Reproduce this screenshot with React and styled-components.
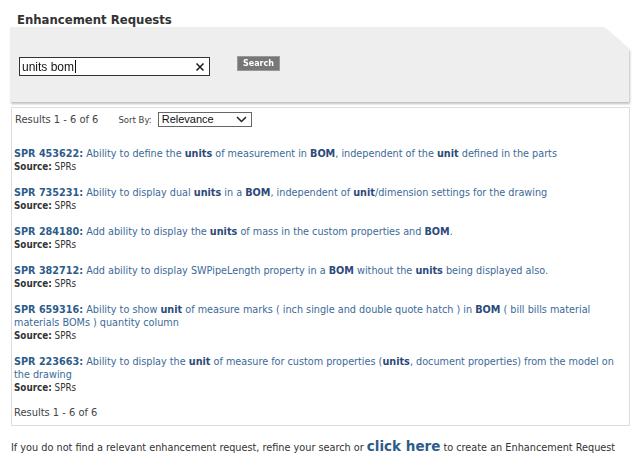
import styled, { createGlobalStyle } from 'styled-components';

const GlobalStyle = createGlobalStyle`
  body {
    margin: 0;
    background: #fff;
    font-family: "DejaVu Sans Condensed", "DejaVu Sans", sans-serif;
    color: #333;
  }
`;

const results = [
  {
    id: '453622',
    parts: ['Ability to define the ', ['units'], ' of measurement in ', ['BOM'], ', independent of the ', ['unit'], ' defined in the parts'],
  },
  {
    id: '735231',
    parts: ['Ability to display dual ', ['units'], ' in a ', ['BOM'], ', independent of ', ['unit'], '/dimension settings for the drawing'],
  },
  {
    id: '284180',
    parts: ['Add ability to display the ', ['units'], ' of mass in the custom properties and ', ['BOM'], '.'],
  },
  {
    id: '382712',
    parts: ['Add ability to display SWPipeLength property in a ', ['BOM'], ' without the ', ['units'], ' being displayed also.'],
  },
  {
    id: '659316',
    parts: ['Ability to show ', ['unit'], ' of measure marks ( inch single and double quote hatch ) in ', ['BOM'], ' ( bill bills material materials BOMs ) quantity column'],
  },
  {
    id: '223663',
    parts: ['Ability to display the ', ['unit'], ' of measure for custom properties (', ['units'], ', document properties) from the model on the drawing'],
  },
];

export default function App() {
  return (
    <>
      <GlobalStyle />
      <Page>
        <Title>Enhancement Requests</Title>
        <SearchShadow>
          <SearchPanel>
            <InputBox>
              <InputText>units bom<Caret /></InputText>
              <ClearIcon viewBox="0 0 10 10">
                <path d="M1.5 1.5 L8.5 8.5 M8.5 1.5 L1.5 8.5" stroke="#222" strokeWidth="1.6" />
              </ClearIcon>
            </InputBox>
            <SearchButton>Search</SearchButton>
          </SearchPanel>
        </SearchShadow>

        <ResultsPanel>
          <ResultsBar>
            <span>Results 1 - 6 of 6</span>
            <SortLabel>Sort By:</SortLabel>
            <Select>
              <span>Relevance</span>
              <svg width="11" height="7" viewBox="0 0 11 7">
                <path d="M1 1 L5.5 5.5 L10 1" fill="none" stroke="#222" strokeWidth="1.5" />
              </svg>
            </Select>
          </ResultsBar>

          <List>
            {results.map((r) => (
              <Item key={r.id}>
                <ItemTitle>
                  <Strong>SPR {r.id}:</Strong>{' '}
                  {r.parts.map((p, i) =>
                    Array.isArray(p) ? <Hit key={i}>{p[0]}</Hit> : <span key={i}>{p}</span>
                  )}
                </ItemTitle>
                <Source>
                  <b>Source:</b> SPRs
                </Source>
              </Item>
            ))}
          </List>

          <ResultsFooter>Results 1 - 6 of 6</ResultsFooter>
        </ResultsPanel>

        <Footer>
          If you do not find a relevant enhancement request, refine your search or{' '}
          <ClickHere>click here</ClickHere> to create an Enhancement Request
        </Footer>
      </Page>
    </>
  );
}

const Page = styled.div`
  padding: 13px 10px 0 10px;
  width: 620px;
`;

const Title = styled.h1`
  margin: 0 0 0 7px;
  font-family: "DejaVu Sans", sans-serif;
  font-size: 11.7px;
  font-weight: bold;
  color: #333;
  line-height: 14px;
`;

const SearchShadow = styled.div`
  filter: drop-shadow(1px 2px 1px rgba(0, 0, 0, 0.25));
  margin-right: 1px;
`;

const SearchPanel = styled.div`
  height: 75px;
  background: #eeeeee;
  clip-path: polygon(0 0, 594px 0, 100% 22px, 100% 100%, 0 100%);
  display: flex;
  align-items: flex-start;
  padding: 30px 0 0 9px;
  box-sizing: border-box;
  gap: 27px;
`;

const InputBox = styled.div`
  width: 191px;
  height: 19px;
  box-sizing: border-box;
  background: #fff;
  border: 1px solid #333;
  display: flex;
  align-items: center;
  justify-content: space-between;
  padding: 0 4px 0 2px;
`;

const InputText = styled.span`
  font-family: "Liberation Sans", Arial, sans-serif;
  font-size: 12px;
  color: #111;
  display: flex;
  align-items: center;
`;

const Caret = styled.span`
  display: inline-block;
  width: 1px;
  height: 13px;
  background: #111;
  margin-left: 1px;
`;

const ClearIcon = styled.svg`
  width: 10px;
  height: 10px;
`;

const SearchButton = styled.div`
  background: #777;
  color: #fff;
  font-family: "DejaVu Sans", sans-serif;
  font-size: 8px;
  font-weight: bold;
  padding: 0 5px;
  height: 13px;
  line-height: 13px;
  border: 1px solid #999;
  margin-top: -1px;
`;

const ResultsPanel = styled.div`
  margin-top: 5px;
  margin-left: 1px;
  border: 1px solid #ddd;
  background: #fff;
  padding: 3px 3px 6px 2px;
`;

const ResultsBar = styled.div`
  display: flex;
  align-items: center;
  height: 16px;
  color: #444;
  font-size: 11px;
  padding-left: 1px;
`;

const SortLabel = styled.span`
  font-size: 9.5px;
  margin-left: 20px;
  margin-right: 6px;
  color: #444;
`;

const Select = styled.div`
  width: 94px;
  height: 15px;
  box-sizing: border-box;
  border: 1px solid #666;
  display: flex;
  align-items: center;
  justify-content: space-between;
  padding: 0 4px 0 3px;
  font-family: "Liberation Sans", Arial, sans-serif;
  font-size: 11px;
  color: #111;
`;

const List = styled.div`
  display: flex;
  flex-direction: column;
  gap: 13px;
  margin-top: 20px;
`;

const Item = styled.div`
  display: flex;
  flex-direction: column;
`;

const ItemTitle = styled.div`
  color: #3c6a98;
  font-size: 10.75px;
  line-height: 13px;
  padding-right: 2px;
`;

const Strong = styled.b`
  color: #2e5c8a;
`;

const Hit = styled.b`
  color: #2b4a7a;
`;

const Source = styled.div`
  font-size: 9.8px;
  line-height: 13px;
  color: #333;
  b {
    color: #333;
  }
`;

const ResultsFooter = styled.div`
  margin-top: 12px;
  font-size: 11px;
  color: #444;
`;

const Footer = styled.p`
  margin: 12px 0 0 1px;
  font-size: 10.8px;
  line-height: 16px;
  color: #333;
`;

const ClickHere = styled.b`
  font-family: "DejaVu Sans", sans-serif;
  font-size: 13.5px;
  color: #2e5c8a;
`;
